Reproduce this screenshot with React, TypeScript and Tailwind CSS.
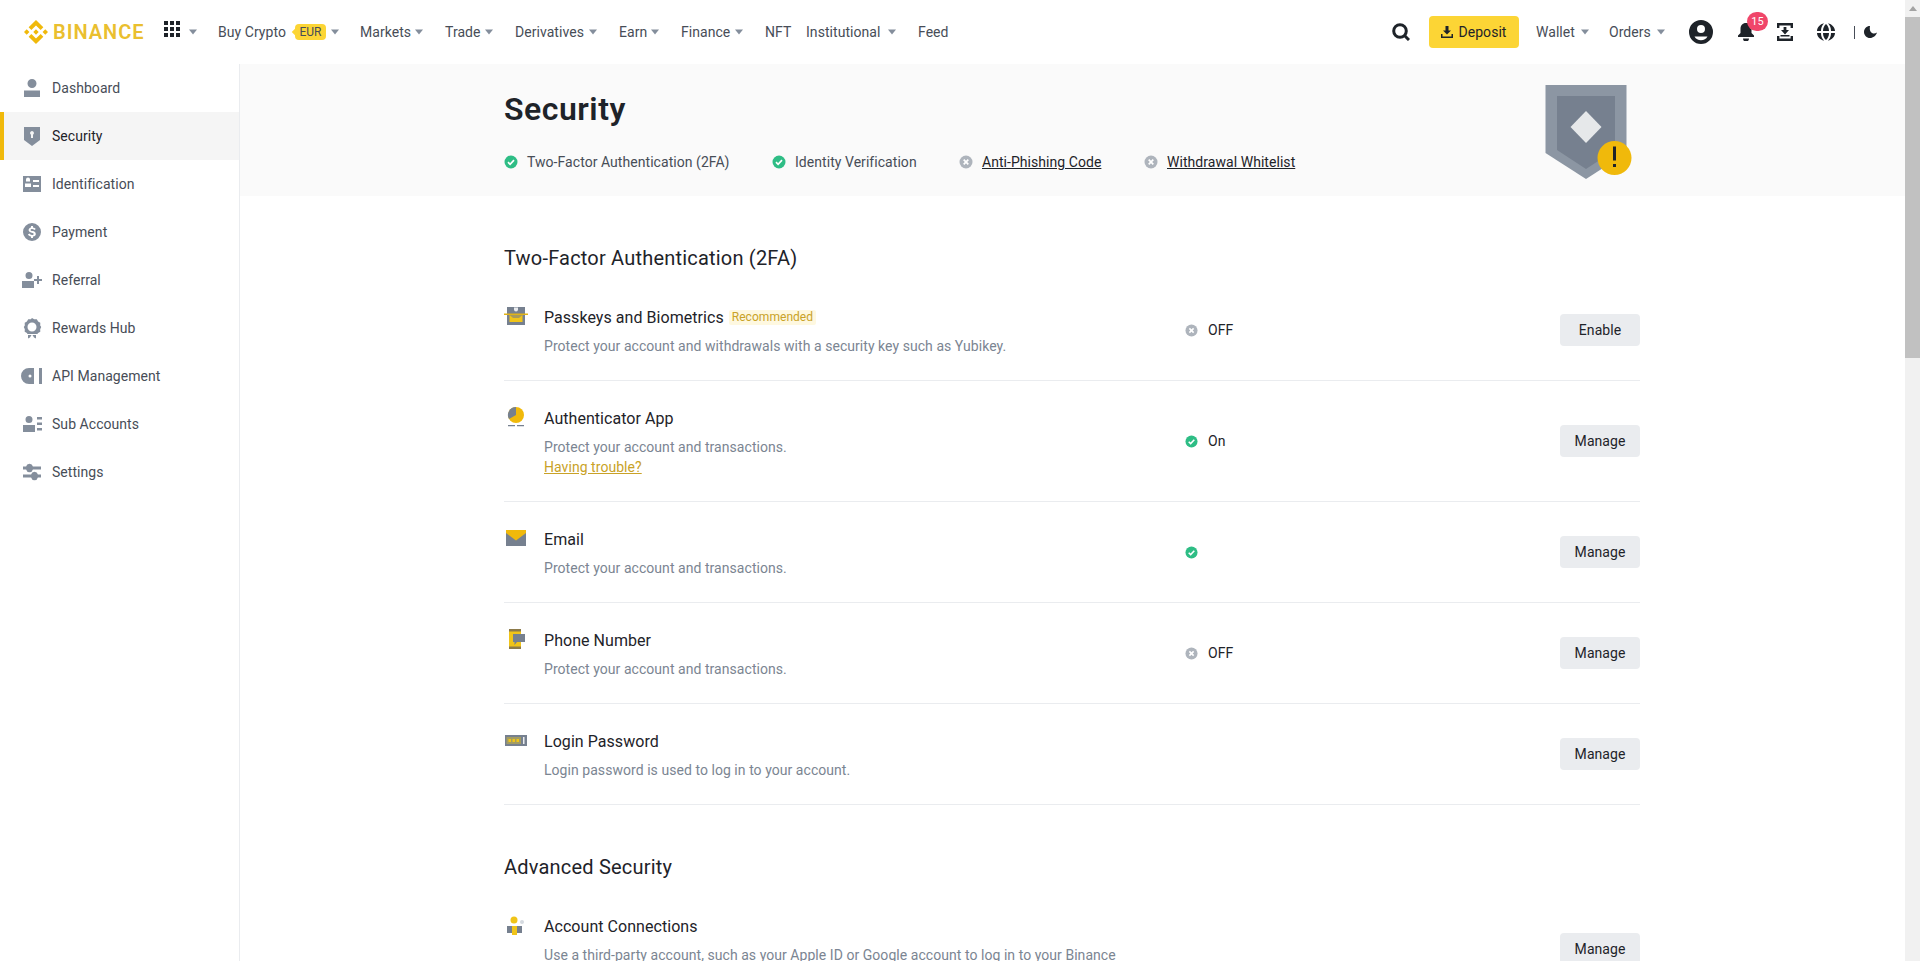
import type { ReactNode } from "react";
import { SiBinance } from "react-icons/si";

const FONT = "font-['Roboto','Liberation_Sans',sans-serif]";

// ── small shared icons ──────────────────────────────────────

function Caret({ className = "ml-[5px]" }: { className?: string }) {
  return (
    <svg viewBox="0 0 8 6" className={`w-2 h-[6px] shrink-0 ${className}`} fill="#848e9c">
      <path d="M0 0.5h8L4 5.5z" />
    </svg>
  );
}

function CheckBadge({ size = "w-[14px] h-[14px]" }: { size?: string }) {
  return (
    <svg viewBox="0 0 14 14" className={size}>
      <circle cx="7" cy="7" r="6.5" fill="#2ebd85" />
      <path d="M4 7.2l2.1 2.1L10 5.2" fill="none" stroke="#fff" strokeWidth="1.7" />
    </svg>
  );
}

function CrossBadge({ size = "w-[14px] h-[14px]" }: { size?: string }) {
  return (
    <svg viewBox="0 0 14 14" className={size}>
      <circle cx="7" cy="7" r="6.5" fill="#aeb4bc" />
      <path d="M4.7 4.7l4.6 4.6M9.3 4.7l-4.6 4.6" fill="none" stroke="#fff" strokeWidth="1.7" />
    </svg>
  );
}

// ── header ──────────────────────────────────────────────────

const NAV = [
  { label: "Markets", w: "w-[50px]", caret: true },
  { label: "Trade", w: "w-[35px]", caret: true },
  { label: "Derivatives", w: "w-[69px]", caret: true },
  { label: "Earn", w: "w-[27px]", caret: true },
  { label: "Finance", w: "w-[49px]", caret: true },
];

function NavLink({ label, w, caret }: { label: string; w: string; caret?: boolean }) {
  return (
    <div className="flex items-center">
      <span className={`${w} whitespace-nowrap text-sm text-[#474d57]`}>{label}</span>
      {caret && <Caret />}
    </div>
  );
}

function Header() {
  return (
    <header className="h-16 shrink-0 bg-white flex items-center pl-6 pr-7">
      <SiBinance className="w-6 h-6 shrink-0 text-[#f0b90b]" />
      <span className="ml-[5px] w-[91px] text-xl leading-none font-semibold tracking-[1px] text-[#eabf2f]">BINANCE</span>
      <svg viewBox="0 0 16 16" className="ml-5 w-4 h-4 shrink-0 -mt-[6px]" fill="#1e2329">
        <path d="M0 0h4v4H0zM6 0h4v4H6zM12 0h4v4h-4zM0 6h4v4H0zM6 6h4v4H6zM12 6h4v4h-4zM0 12h4v4H0zM6 12h4v4H6zM12 12h4v4h-4z" />
      </svg>
      <Caret className="ml-[9px]" />
      <div className="ml-[21px] flex items-center">
        <span className="w-[69px] whitespace-nowrap text-sm text-[#474d57]">Buy Crypto</span>
        <span className="relative ml-2 h-4 w-[31px] rounded-[4px] bg-[#fcd535] text-[#474d57] text-xs leading-4 text-center">
          <span className="absolute -left-[2px] top-[5px] w-[6px] h-[6px] rotate-45 bg-[#fcd535]" />
          <span className="relative">EUR</span>
        </span>
        <Caret />
      </div>
      <div className="ml-[21px] flex items-center gap-[22px]">
        {NAV.map((n) => (
          <NavLink key={n.label} {...n} />
        ))}
        <div className="flex items-center gap-4">
          <NavLink label="NFT" w="w-[25px]" />
          <NavLink label="Institutional" w="w-[77px]" caret />
        </div>
        <NavLink label="Feed" w="w-[30px]" />
      </div>

      <div className="ml-auto flex items-center">
        <svg viewBox="0 0 18 18" className="w-[18px] h-[18px]" fill="none" stroke="#1e2329" strokeWidth="3">
          <circle cx="8" cy="8" r="6.300" />
          <path d="M12.500 12.500l4.500 4.500" />
        </svg>
        <button className="ml-[19px] h-8 w-[90px] rounded-[4px] bg-[#fcd535] flex items-center justify-center text-sm text-[#1e2329]">
          <svg viewBox="0 0 12 12" className="w-3 h-3 mr-[5px]" fill="#1e2329">
            <path d="M4.500 0h3v4.500H10L6 8.500 2 4.500h2.500zM0 8h1.500v2.500h9V8H12v4H0z" />
          </svg>
          Deposit
        </button>
        <div className="ml-[17px] flex items-center">
          <NavLink label="Wallet" w="w-[40px]" caret />
        </div>
        <div className="ml-[20px] flex items-center">
          <NavLink label="Orders" w="w-[43px]" caret />
        </div>
        <svg viewBox="0 0 24 24" className="ml-6 w-6 h-6" fill="#1e2329">
          <path fillRule="evenodd" d="M12 0a12 12 0 100 24 12 12 0 000-24zm0 5a4 4 0 110 8 4 4 0 010-8zM5.500 16.500h13a7.500 7.500 0 01-13 0z" />
        </svg>
        <div className="relative ml-6 w-[18px] h-[18px]">
          <svg viewBox="0 0 18 18" className="w-[18px] h-[18px]" fill="#1e2329">
            <path d="M9 0c-3.500 0-5.500 2.500-5.500 6v4L1 12.500V14h16v-1.500L14.500 10V6C14.500 2.500 12.500 0 9 0zM6 15.500h6A3 3 0 016 15.500z" />
          </svg>
          <span className="absolute -top-[11px] left-[10px] w-[21px] h-[19px] rounded-full bg-[#f0466a] text-white text-[11px] leading-[19px] text-center">15</span>
        </div>
        <svg viewBox="0 0 16 18" className="ml-[22px] w-4 h-[18px]" fill="#1e2329">
          <path d="M0 0h16v5h-2.400V2.400H2.400V5H0zM0 13h2.400v2.600h11.200V13H16v5H0zM4 7h2.600V4h2.800v3H12L8 11.500zM3.500 12h9v1.500h-9z" />
        </svg>
        <svg viewBox="0 0 18 18" className="ml-6 w-[18px] h-[18px]" fill="#1e2329">
          <path d="M7 0.300C3 1.200 0 4.700 0 8h4c0-3 1-5.700 3-7.700zM11 0.300c2 2 3 4.700 3 7.700h4c0-3.300-3-6.800-7-7.700zM6 8h6c0-3-1.200-5.500-3-7-1.800 1.500-3 4-3 7zM0 10c0 3.300 3 6.800 7 7.700-2-2-3-4.700-3-7.700zM18 10h-4c0 3-1 5.700-3 7.700 4-.9 7-4.400 7-7.700zM6 10c0 3 1.200 5.500 3 7 1.800-1.500 3-4 3-7z" />
        </svg>
        <div className="ml-[19px] w-px h-[13px] bg-[#474d57]" />
        <svg viewBox="0 0 13 12" className="ml-[9px] w-[13px] h-3" fill="#1e2329">
          <path d="M6 0C2.500 0 0 2.700 0 6s2.700 6 6 6c3.200 0 5.900-2.300 7-5.500-1 .7-2 1-3 1C7.500 7.500 5 5.500 6 0z" />
        </svg>
      </div>
    </header>
  );
}

// ── sidebar ─────────────────────────────────────────────────

const SIDE_ICONS: Record<string, ReactNode> = {
  Dashboard: <path d="M12 3a4.500 4.500 0 110 9 4.500 4.500 0 010-9zM4 14.500h16V21H4z" />,
  Security: <path fillRule="evenodd" d="M4 3h16v13l-8 6-8-6zM12 7a2 2 0 00-1 3.700V14h2v-3.300A2 2 0 0012 7z" />,
  Identification: <path fillRule="evenodd" d="M3 4h18v16H3zM6 7.500a2 2 0 014 0v2H6zM5 11.500h6V15H5zM13 8h6v2h-6zM13 13h6v2h-6z" />,
  Payment: <path fillRule="evenodd" d="M12 3a9 9 0 100 18 9 9 0 000-18zm-1 3h2v1.400c1.200.2 2.200.8 2.800 1.700l-1.500 1c-.5-.6-1.200-1-2.200-1-.9 0-1.500.3-1.500.9 0 .6.600.8 2 1.100 1.800.4 3.200 1 3.200 2.800 0 1.400-1 2.400-2.800 2.700V18h-2v-1.400c-1.400-.2-2.500-.9-3.100-2l1.600-1c.5.800 1.300 1.300 2.500 1.300 1 0 1.700-.3 1.700-1s-.7-.9-2-1.200c-1.700-.4-3.100-1-3.100-2.700 0-1.400 1-2.300 2.400-2.600z" />,
  Referral: <path d="M9 4a3.500 3.500 0 110 7 3.500 3.500 0 010-7zM2 13h12v7H2zM17 8h2v3h3v2h-3v3h-2v-3h-3v-2h3z" />,
  "Rewards Hub": <path fillRule="evenodd" d="M12 2l2.200 1.300 2.600-.1 1.300 2.300 2.200 1.300-.1 2.600L21.200 11l-1 2.200.1 2.500-2.200 1.300-.7 1H7.500l-.6-1-2.200-1.300.1-2.500L3.800 11l1-1.600-.1-2.600 2.200-1.300 1.300-2.300 2.600.1zM12 6.500a4.500 4.500 0 100 9 4.500 4.500 0 000-9zM8 19h3.500L10 21.500l-2 1zM16 19h-3.500l1.500 2.500 2 1z" />,
  "API Management": <path fillRule="evenodd" d="M11 4H9a8 8 0 000 16h5V4zM10 10.500a1.500 1.500 0 110 3 1.500 1.500 0 010-3zM19 4h3v16h-3z" />,
  "Sub Accounts": <path d="M9 4a3.500 3.500 0 110 7 3.500 3.500 0 010-7zM3 13h12v7H3zM17 5h5v2.500h-5zM17 10.500h5V13h-5zM17 16h5v2.500h-5z" />,
  Settings: <path d="M3 6.500h3.100a3.500 3.500 0 016.800 0H21v3h-8.100a3.500 3.500 0 01-6.800 0H3zM3 14.500h8.100a3.500 3.500 0 016.800 0H21v3h-3.100a3.500 3.500 0 01-6.800 0H3z" />,
};

function Sidebar() {
  const items = Object.keys(SIDE_ICONS);
  return (
    <aside className="w-60 shrink-0 border-r border-[#eaecef] bg-white">
      {items.map((name) => {
        const active = name === "Security";
        return (
          <div
            key={name}
            className={
              active
                ? "h-12 flex items-center gap-2 border-l-4 border-[#f0b90b] bg-[#f5f5f5] pl-4 text-sm text-[#1e2329]"
                : "h-12 flex items-center gap-2 border-l-4 border-transparent pl-4 text-sm text-[#474d57]"
            }
          >
            <svg viewBox="0 0 24 24" className="w-6 h-6 shrink-0" fill="#848e9c">
              {SIDE_ICONS[name]}
            </svg>
            {name}
          </div>
        );
      })}
    </aside>
  );
}

// ── hero ────────────────────────────────────────────────────

function HeroStatus({ ok, label, className }: { ok?: boolean; label: string; className: string }) {
  return (
    <div className={`flex items-center gap-[9px] text-sm ${className}`}>
      {ok ? <CheckBadge /> : <CrossBadge />}
      <span className={ok ? "text-[#474d57]" : "text-[#1e2329] underline"}>{label}</span>
    </div>
  );
}

function Hero() {
  return (
    <section className="h-[132px] shrink-0 bg-[#fafafa] pl-[264px]">
      <div className="w-[1136px] flex justify-between">
        <div className="pt-[25px]">
          <h1 className="text-[32px] leading-10 font-semibold tracking-[0.5px] text-[#1e2329]">Security</h1>
          <div className="mt-[23px] flex items-center">
            <HeroStatus ok label="Two-Factor Authentication (2FA)" className="w-[268px]" />
            <HeroStatus ok label="Identity Verification" className="w-[187px]" />
            <HeroStatus label="Anti-Phishing Code" className="w-[185px]" />
            <HeroStatus label="Withdrawal Whitelist" className="w-[175px]" />
          </div>
        </div>
        <svg viewBox="0 0 96 96" className="w-24 h-24 mt-5">
          <path d="M1.500 1h81v68L42 95 1.500 69z" fill="#8c96a3" />
          <path d="M13 12h58v54L42 85 13 66z" fill="#76808f" />
          <path d="M42 27l15.500 16L42 59 26.500 43z" fill="#e6e8ea" />
          <circle cx="70.500" cy="74" r="17" fill="#f0b90b" />
          <path d="M69 62.500h3v14h-3zM69 80h3v3h-3z" fill="#1e2329" />
        </svg>
      </div>
    </section>
  );
}

// ── security rows ───────────────────────────────────────────

function PasskeyIcon() {
  return (
    <svg viewBox="0 0 24 24" className="w-6 h-6">
      <path d="M3 3h18v18H3z" fill="#76808f" />
      <path d="M10 3.500h4v2a2 2 0 01-4 0z" fill="#eaecef" />
      <path d="M5.500 10.500h13V18h-13z" fill="#f0c419" />
      <path d="M0 9.500h24v1.500H0z" fill="#e0b318" />
      <path d="M5.500 11l3.500 3h6l3.500-3z" fill="#a89a5a" />
    </svg>
  );
}

function AuthAppIcon() {
  return (
    <svg viewBox="0 0 24 24" className="w-6 h-6">
      <circle cx="12" cy="10" r="8" fill="#f0b90b" />
      <path d="M12 10V2a8 8 0 00-7 12z" fill="#76808f" />
      <path d="M4 20h7v1.200H4zM13 20h7v1.200h-7z" fill="#76808f" />
    </svg>
  );
}

function EmailIcon() {
  return (
    <svg viewBox="0 0 24 24" className="w-6 h-6">
      <path d="M2 4h20v16H2z" fill="#76808f" />
      <path d="M2 4h20v3l-10 7.500L2 7z" fill="#f0b90b" />
    </svg>
  );
}

function PhoneIcon() {
  return (
    <svg viewBox="0 0 24 24" className="w-6 h-6">
      <path d="M5 2h12v20H5z" fill="#8c7a4a" />
      <path d="M5 4.500h12v15H5z" fill="#f0c419" />
      <path d="M9 7h12v8h-8l-2.500 3V15H9z" fill="#76808f" />
    </svg>
  );
}

function PasswordIcon() {
  return (
    <svg viewBox="0 0 24 24" className="w-6 h-6">
      <path d="M1 7h22v11H1z" fill="#76808f" />
      <path d="M2.500 9h14.500v7H2.500z" fill="#a39c62" />
      <path d="M4.500 11h2.500v3H4.500zM8.500 11H11v3H8.500zM12.500 11H15v3h-2.500z" fill="#f0c419" />
      <path d="M19 9h1.500v7H19z" fill="#eaecef" />
    </svg>
  );
}

function ConnectIcon() {
  return (
    <svg viewBox="0 0 24 24" className="w-6 h-6">
      <circle cx="10" cy="7" r="3.500" fill="#f0c419" />
      <circle cx="18" cy="9" r="2" fill="#d5dae0" />
      <path d="M3 13h15v7H3z" fill="#76808f" />
      <path d="M8 13h5v9H8z" fill="#f0c419" />
    </svg>
  );
}

type RowProps = {
  icon: ReactNode;
  title: string;
  badge?: string;
  desc: string;
  link?: string;
  status?: "on" | "off";
  statusText?: string;
  action: string;
};

function Row({ icon, title, badge, desc, link, status, statusText, action }: RowProps) {
  return (
    <div className="flex items-center border-b border-[#eaecef] py-6">
      <div className="w-[681px] shrink-0 flex items-start">
        <div className="w-10 shrink-0">{icon}</div>
        <div className="w-[600px]">
          <div className="flex items-end h-[26px]">
            <span className="text-base leading-6 font-[450] text-[#1e2329]">{title}</span>
            {badge && (
              <span className="ml-[5px] mb-[5px] h-[15px] px-[3px] rounded-[2px] bg-[#fef8e0] text-xs leading-[15px] text-[#c9a227]">{badge}</span>
            )}
          </div>
          <p className="mt-1.5 text-sm leading-5 text-[#7b8592]">{desc}</p>
          {link && <p className="text-sm leading-5 text-[#c9a227] underline">{link}</p>}
        </div>
      </div>
      <div className="flex-1 flex items-center gap-[10px] text-sm font-[450] text-[#1e2329]">
        {status === "on" && <CheckBadge size="w-[13px] h-[13px]" />}
        {status === "off" && <CrossBadge size="w-[13px] h-[13px]" />}
        {statusText}
      </div>
      <button className="h-8 w-20 rounded-[4px] bg-[#eaecef] text-sm font-[450] text-[#1e2329]">{action}</button>
    </div>
  );
}

function Scrollbar() {
  return (
    <div className="w-[15px] shrink-0 bg-[#f1f1f1] flex flex-col items-center">
      <div className="h-[17px] flex items-center justify-center">
        <svg viewBox="0 0 8 5" className="w-2 h-[5px]" fill="#a3a3a3">
          <path d="M4 0l4 5H0z" />
        </svg>
      </div>
      <div className="h-[341px] w-full bg-[#c1c1c1]" />
    </div>
  );
}

export default function App() {
  return (
    <div className={`h-[961px] w-[1920px] flex overflow-hidden bg-white tracking-[0.05px] ${FONT}`}>
      <div className="flex-1 min-w-0 flex flex-col">
        <Header />
        <div className="flex-1 min-h-0 flex">
          <Sidebar />
          <main className="flex-1 min-w-0 flex flex-col">
            <Hero />
            <div className="w-[1136px] ml-[264px] pt-12">
              <h2 className="text-xl leading-7 font-[450] tracking-[0.2px] text-[#1e2329]">Two-Factor Authentication (2FA)</h2>
              <div className="mt-2">
                <Row icon={<PasskeyIcon />} title="Passkeys and Biometrics" badge="Recommended" desc="Protect your account and withdrawals with a security key such as Yubikey." status="off" statusText="OFF" action="Enable" />
                <Row icon={<AuthAppIcon />} title="Authenticator App" desc="Protect your account and transactions." link="Having trouble?" status="on" statusText="On" action="Manage" />
                <Row icon={<EmailIcon />} title="Email" desc="Protect your account and transactions." status="on" action="Manage" />
                <Row icon={<PhoneIcon />} title="Phone Number" desc="Protect your account and transactions." status="off" statusText="OFF" action="Manage" />
                <Row icon={<PasswordIcon />} title="Login Password" desc="Login password is used to log in to your account." action="Manage" />
              </div>
              <h2 className="mt-12 text-xl leading-7 font-[450] tracking-[0.2px] text-[#1e2329]">Advanced Security</h2>
              <div className="mt-2">
                <Row icon={<ConnectIcon />} title="Account Connections" desc="Use a third-party account, such as your Apple ID or Google account to log in to your Binance account." action="Manage" />
              </div>
            </div>
          </main>
        </div>
      </div>
      <Scrollbar />
    </div>
  );
}
